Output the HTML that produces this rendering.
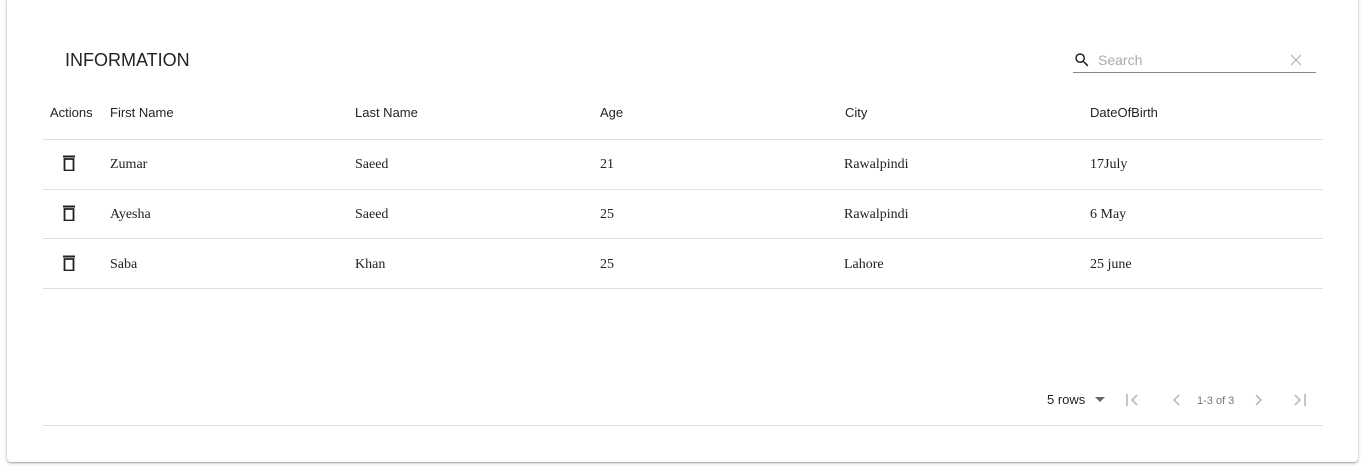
<!DOCTYPE html>
<html><head><style>
body{margin:0;width:1366px;height:472px;background:#fff;position:relative;overflow:hidden;font-family:"Liberation Sans",Arial,sans-serif;}
.card{position:absolute;left:7px;top:-4px;width:1351px;height:466px;background:#fff;border-radius:4px;box-shadow:0 1px 3px rgba(0,0,0,.3),0 1px 1px rgba(0,0,0,.14);}
.a{position:absolute;white-space:nowrap;}
.h{font-size:13px;color:rgba(0,0,0,.87);top:105px;}
.c{font-family:"Liberation Serif",serif;font-size:14px;color:#222;}
.line{position:absolute;left:43px;width:1280px;height:1px;background:#e0e0e0;}
</style></head><body>
<div class="card"></div>
<div class="a" style="left:65px;top:50px;font-size:18px;color:rgba(0,0,0,.87)">INFORMATION</div>
<svg class="a" style="left:1073px;top:51px" width="18" height="18" viewBox="0 0 24 24"><path d="M15.5 14h-.79l-.28-.27A6.47 6.47 0 0016 9.5 6.5 6.5 0 109.5 16c1.61 0 3.09-.59 4.23-1.57l.27.28v.79l5 4.99L20.49 19l-4.99-5zm-6 0C7.01 14 5 11.99 5 9.5S7.01 5 9.5 5 14 7.01 14 9.5 11.99 14 9.5 14z" fill="#222"/></svg>
<div class="a" style="left:1098px;top:52px;font-size:14px;color:#aaa">Search</div>
<svg class="a" style="left:1289px;top:53px" width="14" height="14" viewBox="0 0 14 14"><path d="M2 2L12 12M12 2L2 12" stroke="#bbb" stroke-width="1.3"/></svg>
<div class="a" style="left:1073px;top:72px;width:243px;height:1px;background:#888"></div>
<div class="a h" style="left:50px">Actions</div>
<div class="a h" style="left:110px">First Name</div>
<div class="a h" style="left:355px">Last Name</div>
<div class="a h" style="left:600px">Age</div>
<div class="a h" style="left:845px">City</div>
<div class="a h" style="left:1090px">DateOfBirth</div>
<div class="line" style="top:139px"></div>
<div class="line" style="top:189px"></div>
<div class="line" style="top:238px"></div>
<div class="line" style="top:288px"></div>
<div class="line" style="top:425px"></div>

<svg class="a" style="left:62px;top:155px" width="14" height="16" viewBox="0 0 14 16"><rect x="1" y="0.5" width="12" height="2" fill="#222"/><path d="M2.5 4h9v11.5h-9z" fill="none" stroke="#222" stroke-width="1.8"/></svg>
<svg class="a" style="left:62px;top:205px" width="14" height="16" viewBox="0 0 14 16"><rect x="1" y="0.5" width="12" height="2" fill="#222"/><path d="M2.5 4h9v11.5h-9z" fill="none" stroke="#222" stroke-width="1.8"/></svg>
<svg class="a" style="left:62px;top:255px" width="14" height="16" viewBox="0 0 14 16"><rect x="1" y="0.5" width="12" height="2" fill="#222"/><path d="M2.5 4h9v11.5h-9z" fill="none" stroke="#222" stroke-width="1.8"/></svg>

<div class="a c" style="left:110px;top:157px">Zumar</div><div class="a c" style="left:355px;top:157px">Saeed</div><div class="a c" style="left:600px;top:157px">21</div><div class="a c" style="left:844px;top:157px">Rawalpindi</div><div class="a c" style="left:1090px;top:157px">17July</div>
<div class="a c" style="left:110px;top:207px">Ayesha</div><div class="a c" style="left:355px;top:207px">Saeed</div><div class="a c" style="left:600px;top:207px">25</div><div class="a c" style="left:844px;top:207px">Rawalpindi</div><div class="a c" style="left:1090px;top:207px">6 May</div>
<div class="a c" style="left:110px;top:257px">Saba</div><div class="a c" style="left:355px;top:257px">Khan</div><div class="a c" style="left:600px;top:257px">25</div><div class="a c" style="left:844px;top:257px">Lahore</div><div class="a c" style="left:1090px;top:257px">25 june</div>

<div class="a" style="left:1047px;top:392px;font-size:13px;color:#222">5 rows</div>
<svg class="a" style="left:1095px;top:397px" width="10" height="6" viewBox="0 0 10 6"><path d="M0 0h10L5 5z" fill="#666"/></svg>
<svg class="a" style="left:1124px;top:392px" width="16" height="16" viewBox="0 0 16 16"><path d="M3 2v12M13 3L8 8l5 5" stroke="#bbb" stroke-width="1.6" fill="none"/></svg>
<svg class="a" style="left:1168px;top:392px" width="16" height="16" viewBox="0 0 16 16"><path d="M11 3L6 8l5 5" stroke="#bbb" stroke-width="1.6" fill="none"/></svg>
<div class="a" style="left:1197px;top:395px;font-size:11px;color:#777">1-3 of 3</div>
<svg class="a" style="left:1251px;top:392px" width="16" height="16" viewBox="0 0 16 16"><path d="M5 3l5 5-5 5" stroke="#bbb" stroke-width="1.6" fill="none"/></svg>
<svg class="a" style="left:1292px;top:392px" width="16" height="16" viewBox="0 0 16 16"><path d="M3 3l5 5-5 5M13 2v12" stroke="#bbb" stroke-width="1.6" fill="none"/></svg>
</body></html>
